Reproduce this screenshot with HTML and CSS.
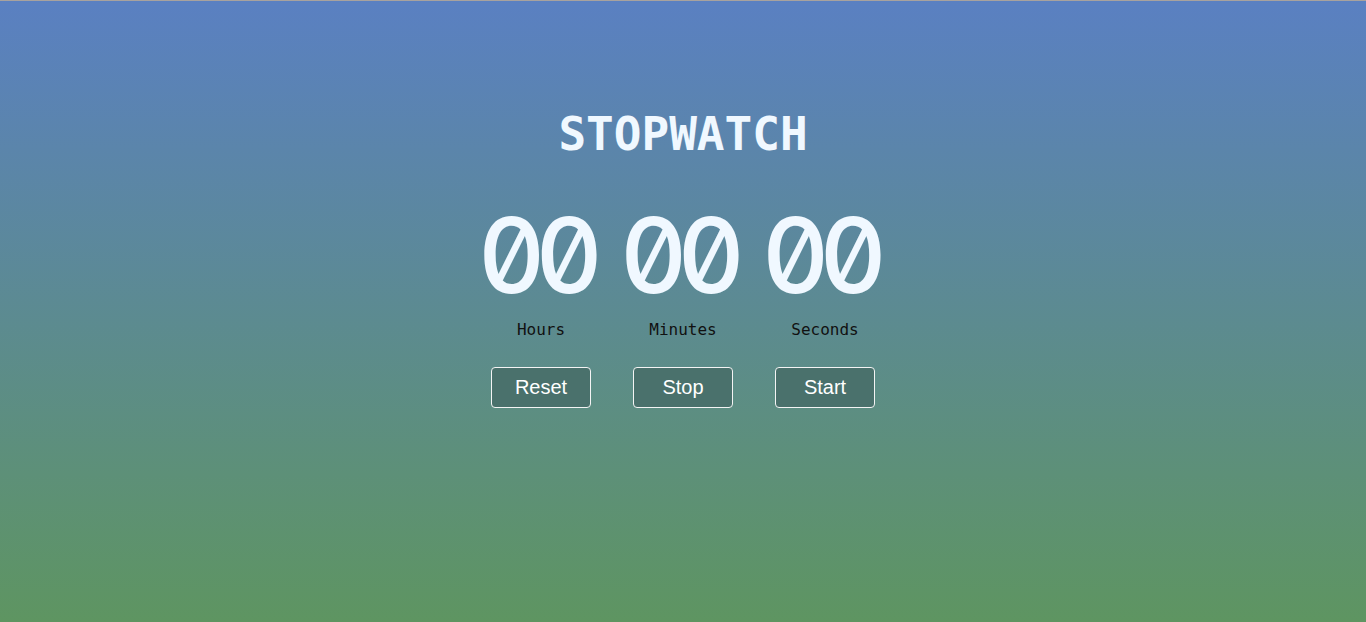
FILE: index.html
```html
<!DOCTYPE html>
<html lang="en">
<head>
<meta charset="utf-8">
<title>Stopwatch</title>
<link rel="stylesheet" href="styles.css">
</head>
<body>
<main class="app">
  <h1 class="title">STOPWATCH</h1>
  <div class="board">
    <div class="digits">00</div>
    <div class="digits">00</div>
    <div class="digits">00</div>
    <div class="label">Hours</div>
    <div class="label">Minutes</div>
    <div class="label">Seconds</div>
    <button class="btn">Reset</button>
    <button class="btn">Stop</button>
    <button class="btn">Start</button>
  </div>
</main>
</body>
</html>
```
FILE: styles.css
```css
html, body {
  margin: 0;
  height: 100%;
}
body {
  border-top: 1px solid #a8a29e;
  box-sizing: border-box;
  background: linear-gradient(to bottom, #5a80c2 0%, #5e9561 100%);
  font-family: "DejaVu Sans Mono", "Liberation Mono", monospace;
}
.app {
  display: flex;
  flex-direction: column;
  align-items: center;
  padding-top: 105px;
}
.title {
  margin: 0;
  font-size: 46px;
  line-height: 56px;
  font-weight: bold;
  color: #f0f8ff;
}
.board {
  margin-top: 48px;
  display: grid;
  grid-template-columns: repeat(3, 100px);
  column-gap: 42px;
  justify-items: center;
}
.digits {
  font-family: "Inter", "DejaVu Sans Mono", sans-serif;
  font-variant-numeric: slashed-zero tabular-nums;
  font-feature-settings: "zero" 1, "tnum" 1;
  font-weight: 500;
  font-size: 104px;
  line-height: 90px;
  letter-spacing: -10px;
  padding-right: 11px;
  color: #f0f8ff;
  white-space: nowrap;
}
.label {
  margin-top: 20px;
  font-size: 16px;
  line-height: 20px;
  color: #111;
}
.btn {
  margin-top: 27px;
  width: 100px;
  height: 41px;
  background: #4a716c;
  color: #fff;
  border: 1px solid #f4f4f4;
  border-radius: 4px;
  font-family: "Liberation Sans", Arial, sans-serif;
  font-size: 20px;
  padding: 0;
}
```
